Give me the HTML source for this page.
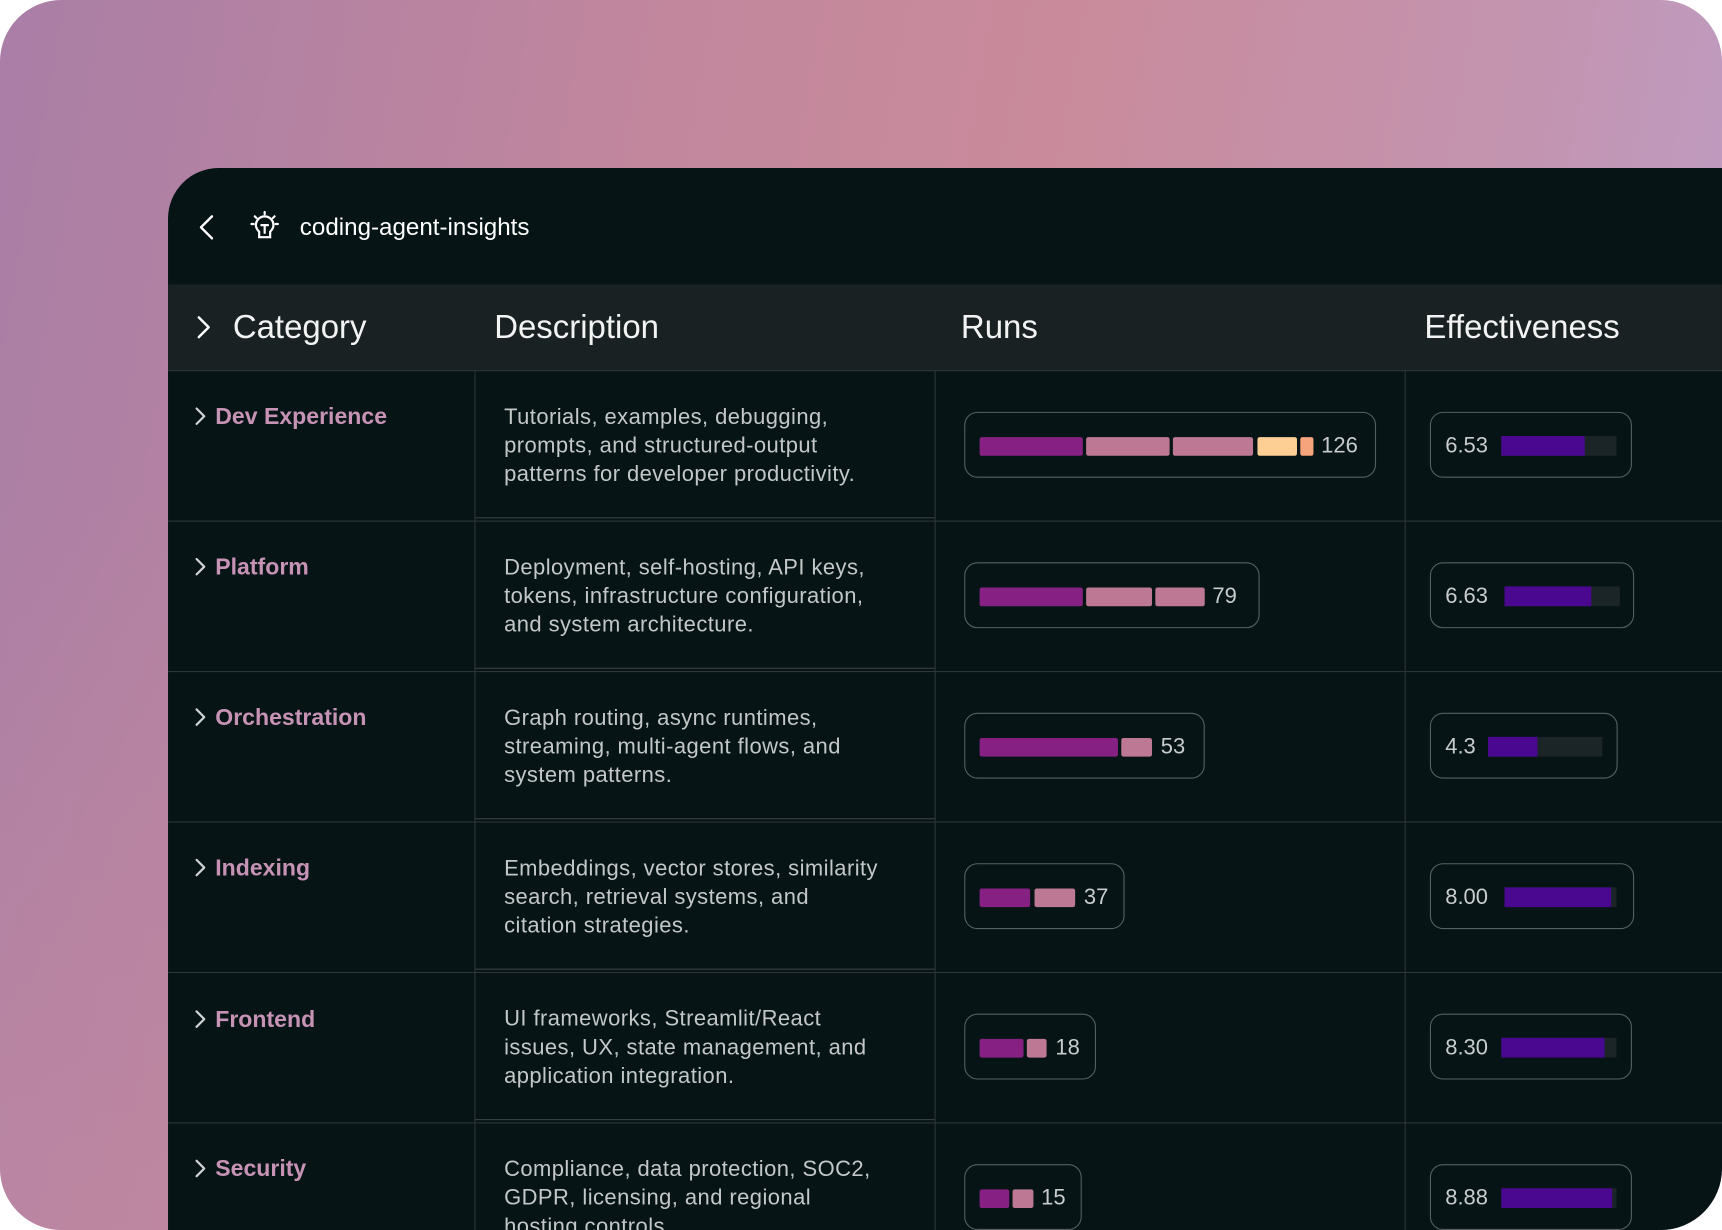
<!DOCTYPE html>
<html><head><meta charset="utf-8"><style>
html,body{margin:0;padding:0;background:#fff;width:1722px;height:1230px;overflow:hidden}
#w{position:absolute;left:0;top:0;width:1568px;height:1120px;transform:scale(1.09821,1.09821);transform-origin:0 0;border-radius:56px;overflow:hidden;
background:linear-gradient(100deg,#a97ea6 0%,#c2879d 35%,#c98b9b 55%,#c394b0 80%,#bba0cc 100%);font-family:"Liberation Sans",sans-serif}
#w:before{content:"";position:absolute;left:0;top:0;right:0;bottom:0;background:linear-gradient(180deg,rgba(0,0,0,0) 40%,rgba(200,140,160,.4) 100%)}
.panel{position:absolute;left:153px;top:153px;width:1500px;height:1000px;background:#061416;border-top-left-radius:46px}
.a{position:absolute}
.hdr{position:absolute;left:153px;top:259px;width:1420px;height:78px;background:#1a2123;border-bottom:1px solid #2d3436}
.hdr span{position:absolute;top:23px;font-size:30px;color:#f2f4f4}
.hl{position:absolute;height:1px;background:#2d3537;left:153px;width:1420px}
.vl{position:absolute;width:1px;background:#2d3537}
.cat{position:absolute;left:196px;font-size:21px;font-weight:bold;color:#c793b5}
.chev{position:absolute;left:177px}
.desc{position:absolute;left:459px;font-size:20px;line-height:26px;color:#c3c7c7;white-space:nowrap;letter-spacing:0.4px}
.pill{position:absolute;height:60px;border:1.5px solid #566062;border-radius:12px;box-sizing:border-box}
.bar{position:absolute;top:22px;height:17px;border-radius:2px}
.num{position:absolute;top:19px;font-size:20px;color:#c8cccc}
.p{background:#862183}.k{background:#bd7993}.y{background:#fdcf94}.o{background:#f5a47c}
.tr{position:absolute;top:21px;height:18px;background:#1b2426}
.fl{position:absolute;left:0;top:0;height:18px;background:#4a0890}
</style></head><body><div id="w">
<div class="panel"></div>
<svg class="a" style="left:176px;top:194px" width="24" height="26" viewBox="0 0 24 26"><path d="M17 3 L7 13 L17 23" fill="none" stroke="#fff" stroke-width="2.2" stroke-linecap="round" stroke-linejoin="round"/></svg>
<svg class="a" style="left:226px;top:191px" width="30" height="30" viewBox="0 0 30 30" fill="none" stroke="#fff" stroke-width="2" stroke-linecap="round"><path d="M15 2v2M6 6l1.5 1.5M24 6l-1.5 1.5M3 13h2M25 13h2"/><path d="M10 20c-2-2-3-3.5-3-6a8 8 0 0 1 16 0c0 2.5-1 4-3 6v5h-10z"/><path d="M12 14h6M15 14v7"/></svg>
<div class="a" style="left:273px;top:194px;font-size:22px;color:#fff">coding-agent-insights</div>
<div class="hdr"><svg class="a" style="left:25px;top:28px" width="16" height="22" viewBox="0 0 16 22"><path d="M3 2 L12 11 L3 20" fill="none" stroke="#fff" stroke-width="2.2" stroke-linecap="round" stroke-linejoin="round"/></svg>
<span style="left:59px">Category</span><span style="left:297px">Description</span><span style="left:722px">Runs</span><span style="left:1144px">Effectiveness</span></div>
<div class="hl" style="top:474px"></div><div class="hl" style="top:611px"></div><div class="hl" style="top:748px"></div><div class="hl" style="top:885px"></div><div class="hl" style="top:1022px"></div>
<div class="hl" style="top:471px;left:433px;width:418px;background:#3a4244"></div><div class="hl" style="top:608px;left:433px;width:418px;background:#3a4244"></div><div class="hl" style="top:745px;left:433px;width:418px;background:#3a4244"></div><div class="hl" style="top:882px;left:433px;width:418px;background:#3a4244"></div><div class="hl" style="top:1019px;left:433px;width:418px;background:#3a4244"></div>
<div class="vl" style="left:432px;top:338px;height:800px"></div><div class="vl" style="left:851px;top:338px;height:800px"></div><div class="vl" style="left:1279px;top:338px;height:800px"></div>

<svg class="chev" style="top:370px" width="12" height="18" viewBox="0 0 12 18"><path d="M2 2l7 7-7 7" fill="none" stroke="#d0d4d4" stroke-width="2" stroke-linecap="round" stroke-linejoin="round"/></svg>
<svg class="chev" style="top:507px" width="12" height="18" viewBox="0 0 12 18"><path d="M2 2l7 7-7 7" fill="none" stroke="#d0d4d4" stroke-width="2" stroke-linecap="round" stroke-linejoin="round"/></svg>
<svg class="chev" style="top:644px" width="12" height="18" viewBox="0 0 12 18"><path d="M2 2l7 7-7 7" fill="none" stroke="#d0d4d4" stroke-width="2" stroke-linecap="round" stroke-linejoin="round"/></svg>
<svg class="chev" style="top:781px" width="12" height="18" viewBox="0 0 12 18"><path d="M2 2l7 7-7 7" fill="none" stroke="#d0d4d4" stroke-width="2" stroke-linecap="round" stroke-linejoin="round"/></svg>
<svg class="chev" style="top:919px" width="12" height="18" viewBox="0 0 12 18"><path d="M2 2l7 7-7 7" fill="none" stroke="#d0d4d4" stroke-width="2" stroke-linecap="round" stroke-linejoin="round"/></svg>
<svg class="chev" style="top:1055px" width="12" height="18" viewBox="0 0 12 18"><path d="M2 2l7 7-7 7" fill="none" stroke="#d0d4d4" stroke-width="2" stroke-linecap="round" stroke-linejoin="round"/></svg>

<!-- row 1 -->
<div class="cat" style="top:368px">Dev Experience</div>
<div class="desc" style="top:367px">Tutorials, examples, debugging,<br>prompts, and structured-output<br>patterns for developer productivity.</div>
<div class="pill" style="left:878px;top:375px;width:375px"><div class="bar p" style="left:13px;width:94px"></div><div class="bar k" style="left:110px;width:76px"></div><div class="bar k" style="left:189px;width:73px"></div><div class="bar y" style="left:266px;width:36px"></div><div class="bar o" style="left:305px;width:12px"></div><div class="num" style="left:324px">126</div></div>
<div class="pill" style="left:1302px;top:375px;width:184px"><div class="num" style="left:13px">6.53</div><div class="tr" style="left:64px;width:105px"><div class="fl" style="width:76px"></div></div></div>
<!-- row 2 -->
<div class="cat" style="top:505px">Platform</div>
<div class="desc" style="top:504px">Deployment, self-hosting, API keys,<br>tokens, infrastructure configuration,<br>and system architecture.</div>
<div class="pill" style="left:878px;top:512px;width:269px"><div class="bar p" style="left:13px;width:94px"></div><div class="bar k" style="left:110px;width:60px"></div><div class="bar k" style="left:173px;width:45px"></div><div class="num" style="left:225px">79</div></div>
<div class="pill" style="left:1302px;top:512px;width:186px"><div class="num" style="left:13px">6.63</div><div class="tr" style="left:67px;width:105px"><div class="fl" style="width:79px"></div></div></div>
<!-- row 3 -->
<div class="cat" style="top:642px">Orchestration</div>
<div class="desc" style="top:641px">Graph routing, async runtimes,<br>streaming, multi-agent flows, and<br>system patterns.</div>
<div class="pill" style="left:878px;top:649px;width:219px"><div class="bar p" style="left:13px;width:126px"></div><div class="bar k" style="left:142px;width:28px"></div><div class="num" style="left:178px">53</div></div>
<div class="pill" style="left:1302px;top:649px;width:171px"><div class="num" style="left:13px">4.3</div><div class="tr" style="left:52px;width:104px"><div class="fl" style="width:45px"></div></div></div>
<!-- row 4 -->
<div class="cat" style="top:779px">Indexing</div>
<div class="desc" style="top:778px">Embeddings, vector stores, similarity<br>search, retrieval systems, and<br>citation strategies.</div>
<div class="pill" style="left:878px;top:786px;width:146px"><div class="bar p" style="left:13px;width:46px"></div><div class="bar k" style="left:63px;width:37px"></div><div class="num" style="left:108px">37</div></div>
<div class="pill" style="left:1302px;top:786px;width:186px"><div class="num" style="left:13px">8.00</div><div class="tr" style="left:67px;width:102px"><div class="fl" style="width:97px"></div></div></div>
<!-- row 5 -->
<div class="cat" style="top:917px">Frontend</div>
<div class="desc" style="top:915px">UI frameworks, Streamlit/React<br>issues, UX, state management, and<br>application integration.</div>
<div class="pill" style="left:878px;top:923px;width:120px"><div class="bar p" style="left:13px;width:40px"></div><div class="bar k" style="left:56px;width:18px"></div><div class="num" style="left:82px">18</div></div>
<div class="pill" style="left:1302px;top:923px;width:184px"><div class="num" style="left:13px">8.30</div><div class="tr" style="left:64px;width:105px"><div class="fl" style="width:94px"></div></div></div>
<!-- row 6 -->
<div class="cat" style="top:1053px">Security</div>
<div class="desc" style="top:1052px">Compliance, data protection, SOC2,<br>GDPR, licensing, and regional<br>hosting controls.</div>
<div class="pill" style="left:878px;top:1060px;width:107px"><div class="bar p" style="left:13px;width:27px"></div><div class="bar k" style="left:43px;width:19px"></div><div class="num" style="left:69px">15</div></div>
<div class="pill" style="left:1302px;top:1060px;width:184px"><div class="num" style="left:13px">8.88</div><div class="tr" style="left:64px;width:105px"><div class="fl" style="width:101px"></div></div></div>
</div></body></html>
